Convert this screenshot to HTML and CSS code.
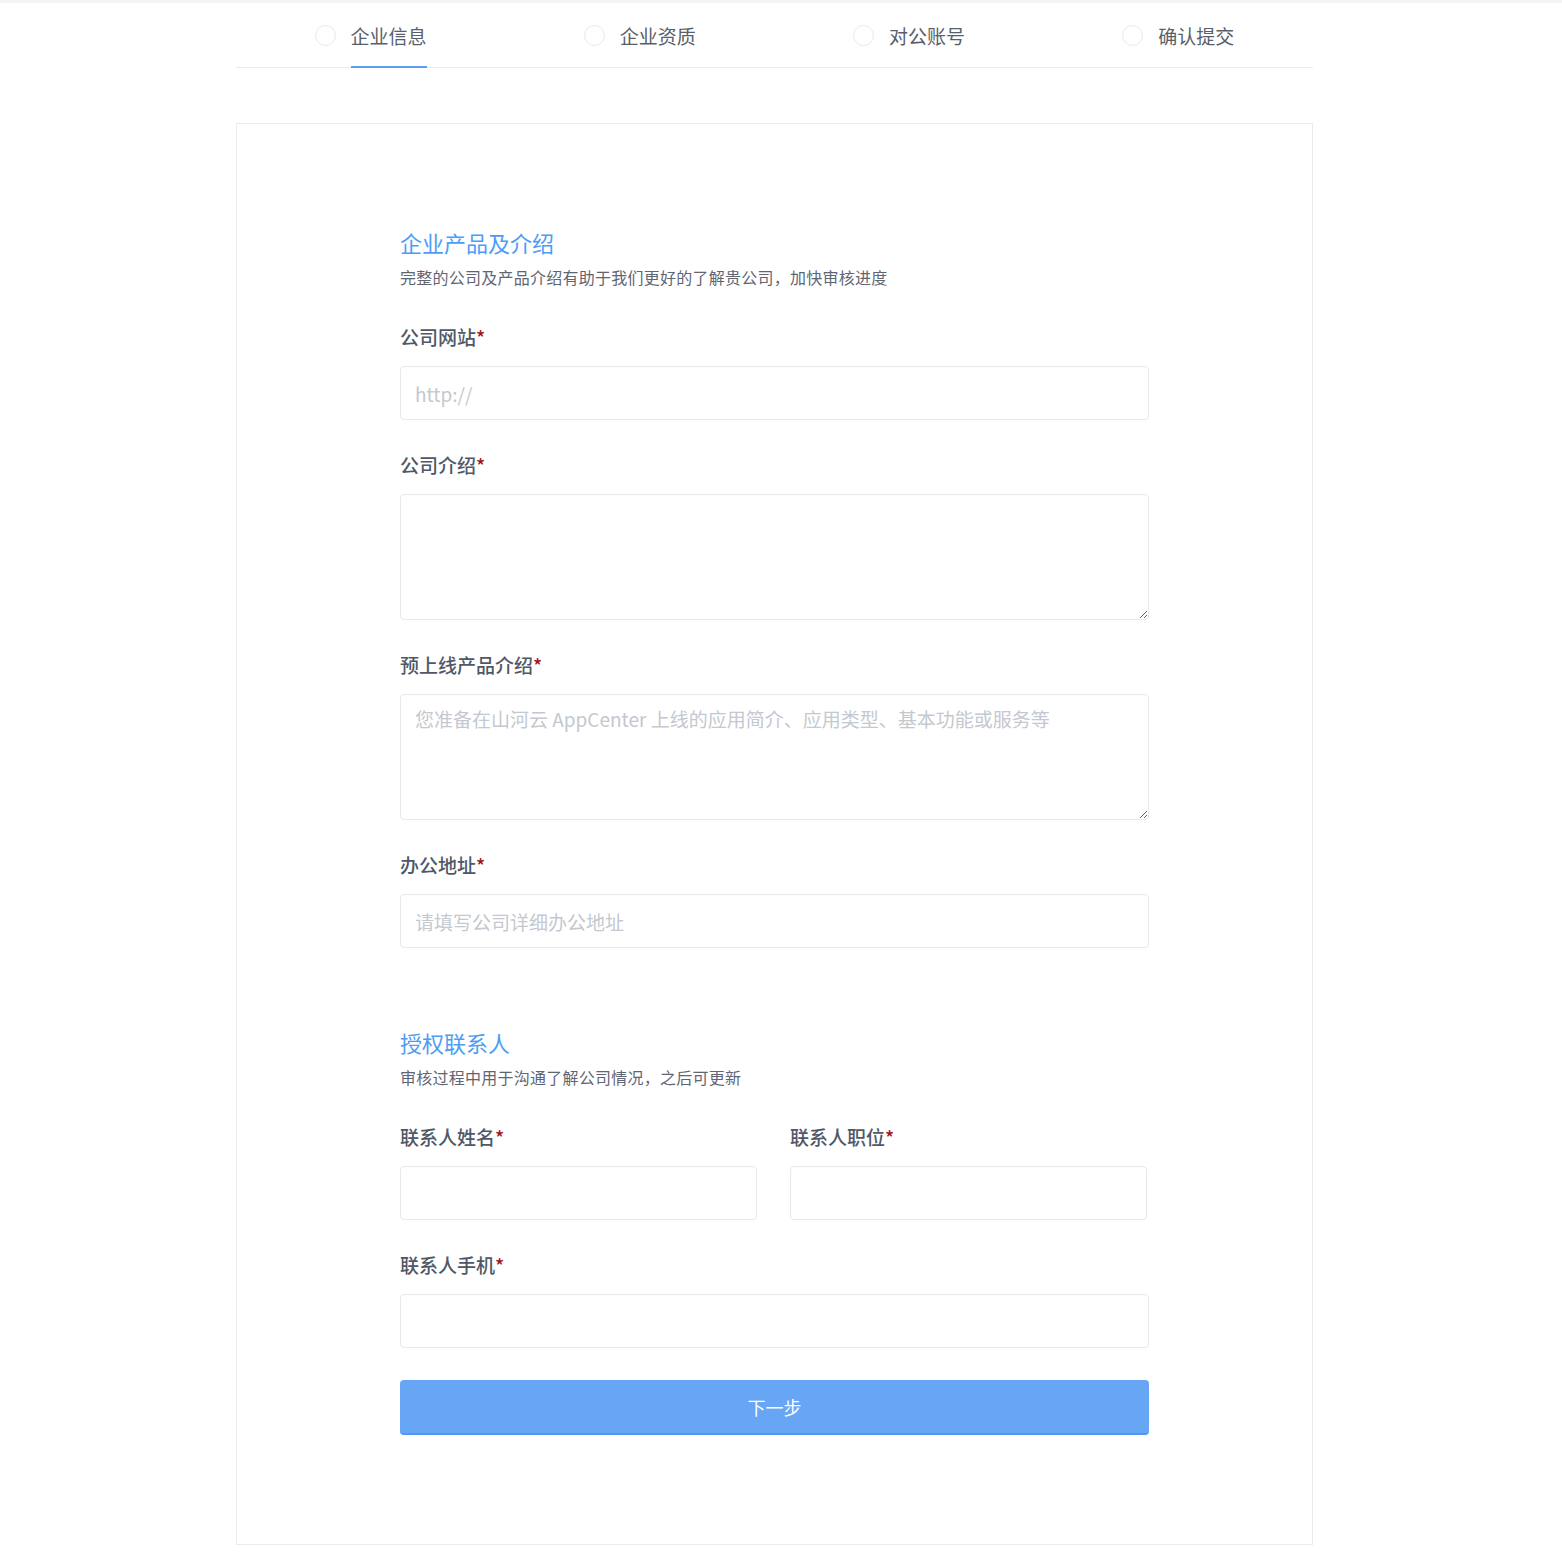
FILE: index.html
```html
<!DOCTYPE html>
<html lang="zh-CN">
<head>
<meta charset="utf-8">
<title>企业信息</title>
<link rel="stylesheet" href="styles.css">
</head>
<body>
<div class="topstrip"></div>
<div class="wrap">
  <nav class="steps">
    <div class="step"><span class="dot"></span><span class="step-label active">企业信息</span></div>
    <div class="step"><span class="dot"></span><span class="step-label">企业资质</span></div>
    <div class="step"><span class="dot"></span><span class="step-label">对公账号</span></div>
    <div class="step"><span class="dot"></span><span class="step-label">确认提交</span></div>
  </nav>
  <div class="card">
    <form class="form">
      <h2 class="sec-title">企业产品及介绍</h2>
      <p class="sec-desc">完整的公司及产品介绍有助于我们更好的了解贵公司，加快审核进度</p>

      <div class="field first">
        <label class="label">公司网站<span class="req">*</span></label>
        <input class="input" type="text" placeholder="http://">
      </div>
      <div class="field">
        <label class="label">公司介绍<span class="req">*</span></label>
        <textarea class="textarea"></textarea>
      </div>
      <div class="field">
        <label class="label">预上线产品介绍<span class="req">*</span></label>
        <textarea class="textarea" placeholder="您准备在山河云 AppCenter 上线的应用简介、应用类型、基本功能或服务等"></textarea>
      </div>
      <div class="field">
        <label class="label">办公地址<span class="req">*</span></label>
        <input class="input" type="text" placeholder="请填写公司详细办公地址">
      </div>

      <h2 class="sec-title second">授权联系人</h2>
      <p class="sec-desc">审核过程中用于沟通了解公司情况，之后可更新</p>

      <div class="row first">
        <div class="col">
          <label class="label">联系人姓名<span class="req">*</span></label>
          <input class="input" type="text">
        </div>
        <div class="col">
          <label class="label">联系人职位<span class="req">*</span></label>
          <input class="input" type="text">
        </div>
      </div>
      <div class="field">
        <label class="label">联系人手机<span class="req">*</span></label>
        <input class="input" type="text">
      </div>

      <button class="btn" type="button">下一步</button>
    </form>
  </div>
</div>
</body>
</html>
```
FILE: styles.css
```css
* { box-sizing: border-box; }
html, body {
  margin: 0;
  padding: 0;
  background: #fff;
  font-family: "Noto Sans CJK SC", "Noto Sans", "Liberation Sans", sans-serif;
}
.topstrip {
  height: 3px;
  background: #f3f4f6;
}
.wrap {
  width: 1077px;
  margin-left: 236px;
  padding-bottom: 16px;
}
.steps {
  display: flex;
  height: 65px;
  border-bottom: 1px solid #e9ebee;
}
.step {
  flex: 1;
  display: flex;
  align-items: center;
  justify-content: center;
  gap: 15px;
}
.dot {
  width: 21px;
  height: 21px;
  border-radius: 50%;
  border: 1px solid #e7e9ec;
  background: #fff;
}
.step-label {
  font-size: 19px;
  color: #585f6b;
  height: 100%;
  display: flex;
  align-items: center;
  border-bottom: 2px solid transparent;
  margin-bottom: -1px;
  padding-top: 2px;
}
.step-label.active {
  border-bottom-color: #5d9ef0;
}
.card {
  margin-top: 55px;
  border: 1px solid #e9ebee;
  padding: 102px 163px 109px;
}
.form {
  width: 749px;
  display: flex;
  flex-direction: column;
}
.sec-title {
  margin: 0;
  font-size: 22px;
  line-height: 32px;
  font-weight: 400;
  color: #4d9cf6;
}
.sec-title.second {
  margin-top: 78px;
}
.sec-desc {
  margin: 8px 0 0;
  font-size: 16px;
  line-height: 22px;
  letter-spacing: 0.25px;
  color: #5f6673;
}
.field {
  display: flex;
  flex-direction: column;
  margin-top: 32px;
}
.field.first, .row.first {
  margin-top: 36px;
}
.row {
  display: flex;
  gap: 33px;
}
.col {
  width: 357px;
  display: flex;
  flex-direction: column;
}
.label {
  font-size: 19px;
  line-height: 26px;
  font-weight: 500;
  color: #4f5867;
  margin-bottom: 16px;
}
.req {
  color: #a3141e;
}
.input, .textarea {
  width: 100%;
  border: 1px solid #e6e8ec;
  border-radius: 4px;
  background: #fff;
  font-family: inherit;
  font-size: 19px;
  color: #333;
  outline: none;
  padding: 0 14px;
}
.input {
  height: 54px;
}
.textarea {
  height: 126px;
  padding: 11px 14px;
  line-height: 26px;
  resize: vertical;
  display: block;
}
.input::placeholder, .textarea::placeholder {
  color: #c4c8cf;
}
.btn {
  margin-top: 32px;
  height: 55px;
  width: 100%;
  border: none;
  border-bottom: 2px solid #4e98f3;
  border-radius: 4px;
  background: #67a6f5;
  color: #fff;
  font-family: inherit;
  font-size: 18px;
  cursor: pointer;
}
```
